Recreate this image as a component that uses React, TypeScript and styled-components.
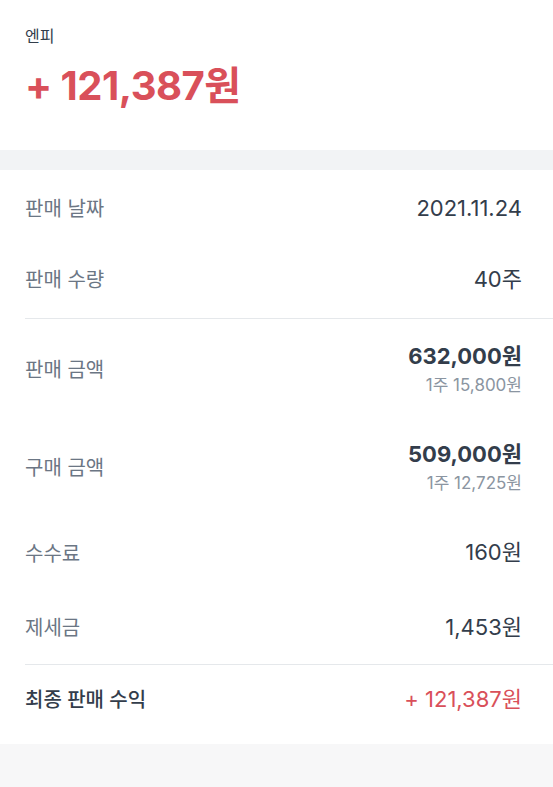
import React from 'react'
import styled, { createGlobalStyle } from 'styled-components'

const GlobalStyle = createGlobalStyle`
  html, body {
    margin: 0;
    padding: 0;
    background-color: #f7f7f8;
  }
  body {
    font-family: 'Inter', 'Noto Sans CJK KR', 'Noto Sans', sans-serif;
  }
`

const Page = styled.div`
  width: 553px;
  min-height: 787px;
  background-color: #f7f7f8;
`

const Header = styled.section`
  background-color: #fff;
  padding: 24px 25px 0;
  height: 126px;
`

const StockName = styled.div`
  font-size: 16px;
  line-height: 24px;
  color: #333d4b;
`

const Profit = styled.div`
  margin-top: 10px;
  font-size: 40px;
  line-height: 56px;
  font-weight: 700;
  color: #d9505a;
  letter-spacing: -0.5px;
`

const Band = styled.div`
  height: 20px;
  background-color: #f2f3f5;
`

const Card = styled.div`
  background-color: #fff;
  padding-bottom: 12px;
`

const Section = styled.div<{ $divider?: boolean; $pad?: string }>`
  margin-left: 25px;
  padding: ${(p) => p.$pad ?? '0'};
  padding-right: 31px;
  border-top: ${(p) => (p.$divider ? '1.5px solid #e5e8eb' : 'none')};
`

const Row = styled.div<{ $height: number }>`
  display: flex;
  align-items: center;
  justify-content: space-between;
  height: ${(p) => p.$height}px;
`

const Label = styled.span<{ $strong?: boolean }>`
  font-size: 20px;
  color: ${(p) => (p.$strong ? '#333d4b' : '#6b7684')};
  font-weight: ${(p) => (p.$strong ? 500 : 400)};
`

const ValueBox = styled.div`
  display: flex;
  flex-direction: column;
  align-items: flex-end;
`

const Value = styled.span<{ $bold?: boolean; $red?: boolean }>`
  font-size: 22px;
  line-height: 30px;
  color: ${(p) => (p.$red ? '#d9505a' : '#333d4b')};
  font-weight: ${(p) => (p.$bold ? 700 : 400)};
`

const SubValue = styled.span`
  margin-top: 3px;
  font-size: 17px;
  line-height: 22px;
  color: #8b95a1;
`

const App = (): JSX.Element => {
  return (
    <Page>
      <GlobalStyle />
      <Header>
        <StockName>엔피</StockName>
        <Profit>+ 121,387원</Profit>
      </Header>
      <Band />
      <Card>
        <Section $pad="2px 0 4px">
          <Row $height={71}>
            <Label>판매 날짜</Label>
            <Value>2021.11.24</Value>
          </Row>
          <Row $height={71}>
            <Label>판매 수량</Label>
            <Value>40주</Value>
          </Row>
        </Section>
        <Section $divider>
          <Row $height={98}>
            <Label>판매 금액</Label>
            <ValueBox>
              <Value $bold>632,000원</Value>
              <SubValue>1주 15,800원</SubValue>
            </ValueBox>
          </Row>
          <Row $height={98}>
            <Label>구매 금액</Label>
            <ValueBox>
              <Value $bold>509,000원</Value>
              <SubValue>1주 12,725원</SubValue>
            </ValueBox>
          </Row>
          <Row $height={74}>
            <Label>수수료</Label>
            <Value>160원</Value>
          </Row>
          <Row $height={75}>
            <Label>제세금</Label>
            <Value>1,453원</Value>
          </Row>
        </Section>
        <Section $divider>
          <Row $height={67}>
            <Label $strong>최종 판매 수익</Label>
            <Value $red>+ 121,387원</Value>
          </Row>
        </Section>
      </Card>
    </Page>
  )
}

export default App
